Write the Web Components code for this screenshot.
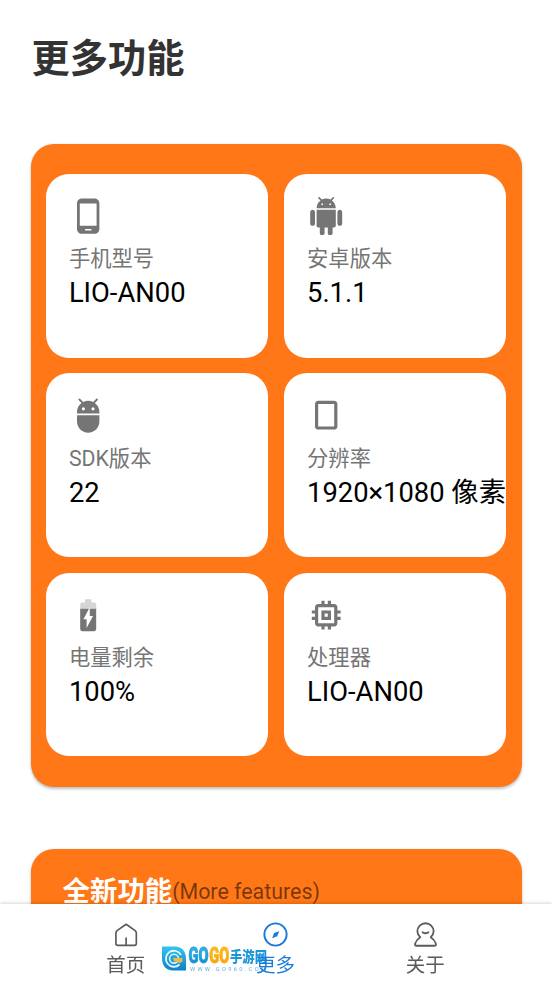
<!DOCTYPE html>
<html lang="zh-CN">
<head>
<meta charset="utf-8">
<title>更多功能</title>
<style>
html,body{margin:0;height:100%;overflow:hidden;background:#fff}
body{font-family:Roboto,"Noto Sans CJK SC",sans-serif}
</style>
</head>
<body>
<more-page></more-page>
<script>
const define = (name, html) => customElements.define(name, class extends HTMLElement {
  connectedCallback() {
    if (this.shadowRoot) return;
    this.attachShadow({mode: 'open'}).innerHTML = typeof html === 'function' ? html(this) : html;
  }
});

const icons = {
  phone: '<path d="M16 1H8C6.34 1 5 2.34 5 4v16c0 1.66 1.34 3 3 3h8c1.66 0 3-1.34 3-3V4c0-1.66-1.34-3-3-3zm-2 20h-4v-1h4v1zm3.25-3H6.75V4h10.5v14z"/>',
  android: '<path d="M6 18c0 .55.45 1 1 1h1v3.5c0 .83.67 1.5 1.5 1.5s1.5-.67 1.5-1.5V19h2v3.5c0 .83.67 1.5 1.5 1.5s1.5-.67 1.5-1.5V19h1c.55 0 1-.45 1-1V8H6v10zM3.5 8C2.67 8 2 8.67 2 9.5v7c0 .83.67 1.5 1.5 1.5S5 17.33 5 16.5v-7C5 8.67 4.33 8 3.5 8zm17 0c-.83 0-1.5.67-1.5 1.5v7c0 .83.67 1.5 1.5 1.5s1.5-.67 1.5-1.5v-7c0-.83-.67-1.5-1.5-1.5zm-4.97-5.84l1.3-1.3c.2-.2.2-.51 0-.71-.2-.2-.51-.2-.71 0l-1.48 1.48C13.85 1.23 12.95 1 12 1c-.96 0-1.86.23-2.66.63L7.85.15c-.2-.2-.51-.2-.71 0-.2.2-.2.51 0 .71l1.31 1.31C6.97 3.26 6 5.01 6 7h12c0-1.99-.97-3.75-2.47-4.84zM10 5H9V4h1v1zm5 0h-1V4h1v1z"/>',
  adb: '<path d="M5 16c0 3.87 3.13 7 7 7s7-3.13 7-7v-4H5v4zM16.12 4.37l2.1-2.1-.82-.83-2.3 2.31C14.16 3.28 13.12 3 12 3s-2.16.28-3.09.75L6.6 1.44l-.82.83 2.1 2.1C6.14 5.64 5 7.68 5 10v1h14v-1c0-2.32-1.14-4.36-2.88-5.63zM9 9c-.55 0-1-.45-1-1s.45-1 1-1 1 .45 1 1-.45 1-1 1zm6 0c-.55 0-1-.45-1-1s.45-1 1-1 1 .45 1 1-.45 1-1 1z"/>',
  portrait: '<path d="M17 3H7c-1.1 0-2 .9-2 2v14c0 1.1.9 2 2 2h10c1.1 0 2-.9 2-2V5c0-1.1-.9-2-2-2zm0 16H7V5h10v14z"/>',
  battery: '<path fill-opacity=".3" d="M17 5.33C17 4.6 16.4 4 15.67 4H14V2h-4v2H8.33C7.6 4 7 4.6 7 5.33V8h5.47L13 7v1h4V5.33z"/><path d="M13 8v4.5h2L11 20v-5.5H9L12.47 8H7v12.67C7 21.4 7.6 22 8.33 22h7.33c.74 0 1.34-.6 1.34-1.33V8h-4z"/>',
  memory: '<path d="M15 9H9v6h6V9zm-2 4h-2v-2h2v2zm8-2V9h-2V7c0-1.1-.9-2-2-2h-2V3h-2v2h-2V3H9v2H7c-1.1 0-2 .9-2 2v2H3v2h2v2H3v2h2v2c0 1.1.9 2 2 2h2v2h2v-2h2v2h2v-2h2c1.1 0 2-.9 2-2v-2h2v-2h-2v-2h2zm-4 6H7V7h10v10z"/>',
  home: '<g fill="none" stroke="currentColor" stroke-width="1.6" stroke-linejoin="round" stroke-linecap="round"><path d="M12.6 2.2 21 8.1Q22.4 9.2 22.4 10.8V20.6Q22.4 22.4 20.6 22.4H4.6Q2.8 22.4 2.8 20.6V10.8Q2.8 9.2 4.2 8.1z"/><path d="M12.6 15.5v6.5"/></g>',
  compass: '<circle cx="12" cy="12" r="10.7" fill="none" stroke="currentColor" stroke-width="1.8"/><path d="M15.6 8.8 13.6 13.6 8.8 15.6 10.6 10.6z"/>',
  person: '<g fill="none" stroke="currentColor" stroke-width="1.7" stroke-linejoin="round" stroke-linecap="round"><path d="M7 14.6A7.6 7.6 0 0 1 4.2 9a7.8 7.8 0 0 1 15.6 0 7.6 7.6 0 0 1-2.8 5.6Q20.8 17 21.8 20.4L22.1 21.6Q22.1 22.8 21 22.8H3Q1.9 22.8 1.9 21.6L2.2 20.4Q3.2 17 7 14.6z"/><path d="M9.2 9.8Q12 11.8 14.8 9.8"/></g>'
};

define('app-icon', el => `<style>:host{display:block;width:38.4px;height:38.4px}svg{display:block;width:100%;height:100%}</style><svg viewBox="0 0 24 24" fill="currentColor">${icons[el.getAttribute('name')]}</svg>`);

define('info-card', el => `<style>
:host{display:block;box-sizing:border-box;min-width:0;background:#fff;border-radius:23px;padding:23px 0 0 23px;overflow:hidden;white-space:nowrap}
app-icon{color:#757575}
.label{font-size:21.3px;line-height:28px;color:#757575;margin-top:9.8px}
.value{font-size:27.35px;line-height:36px;color:#000;margin-top:2px}
</style><app-icon name="${el.getAttribute('icon')}"></app-icon><div class="label"><slot name="label"></slot></div><div class="value"><slot></slot></div>`);

define('orange-panel', `<style>:host{display:block;box-sizing:border-box;background:#ff7716;border-radius:23px;box-shadow:0 1.5px 3px rgba(0,0,0,.26)}</style><slot></slot>`);

define('nav-item', el => `<style>
:host{flex:1;display:flex;flex-direction:column;align-items:center;color:#5b5b5b;padding-top:18px}
:host([active]){color:#1a7bd8}
app-icon{width:25px;height:25px}
.t{font-size:19.5px;line-height:28px;margin-top:5px}
</style><app-icon name="${el.getAttribute('icon')}"></app-icon><div class="t"><slot></slot></div>`);

define('site-mark', `<style>
:host{display:block;position:absolute;left:161px;top:42px;width:108px;height:28px}
svg{display:block;overflow:visible}
</style><svg width="108" height="28" viewBox="0 0 108 28">
<defs><linearGradient id="b" x1="0" y1="0" x2="0" y2="1"><stop offset="0" stop-color="#35c4ee"/><stop offset="1" stop-color="#0c80cc"/></linearGradient>
<linearGradient id="o" x1="0" y1="0" x2="0" y2="1"><stop offset="0" stop-color="#ffc51b"/><stop offset="1" stop-color="#f89a10"/></linearGradient></defs>
<path fill="url(#b)" d="M1 .5H14C21 .5 25 5.5 25 12.5V24.5H12C5 24.5 1 19.5 1 12.5z"/>
<path fill="none" stroke="#e6f8ff" stroke-width="1.8" d="M20 9A8 8 0 1 0 18.5 18.5"/>
<circle cx="13" cy="12.7" r="4.4" fill="none" stroke="#d9f4ff" stroke-width="1.6"/>
<path fill="#f0b94c" d="M12 12h9.5v3.4l-3 2-1.5-2h-4z"/>
<g font-family="Roboto,'Noto Sans CJK SC',sans-serif" font-weight="900">
<text x="27.5" y="17.3" font-size="21.5" textLength="20" lengthAdjust="spacingAndGlyphs" fill="url(#b)" stroke="#1b9bdb" stroke-width=".8">GO</text>
<text x="48.3" y="17.3" font-size="21.5" textLength="20" lengthAdjust="spacingAndGlyphs" fill="url(#o)" stroke="#fbae15" stroke-width=".8">GO</text>
<text x="69" y="16" font-size="14.5" textLength="37" lengthAdjust="spacingAndGlyphs" fill="#1b96d8">手游网</text>
<text x="29" y="25" font-size="5.8" font-weight="400" textLength="76" fill="#5fb2e0">WWW.GO960.COM</text>
</g></svg>`);

define('bottom-nav', `<style>
:host{display:flex;box-sizing:border-box;position:fixed;left:0;right:0;bottom:0;height:77px;padding:0 52px 0 51px;background:#fff;box-shadow:0 -1px 3px rgba(0,0,0,.16)}
nav-item{position:relative;z-index:1}
</style><site-mark></site-mark><nav-item icon="home">首页</nav-item><nav-item icon="compass" active>更多</nav-item><nav-item icon="person">关于</nav-item>`);

define('more-page', `<style>
:host{display:block;box-sizing:border-box;padding:31px 30.5px 0 30.6px}
h1{margin:0 0 56.6px 1px;font-size:38.2px;line-height:57px;height:56px;font-weight:700;color:#333}
.grid{display:grid;grid-template-columns:1fr 1fr;grid-template-rows:repeat(3,183.6px);gap:15.8px 16px;padding:30.4px 15.3px 30.2px}
.more{margin-top:62px;height:160px;padding:23px 32px;display:flex;align-items:flex-start;white-space:nowrap}
.panels{display:flex;flex-direction:column}
b{font-size:27.4px;line-height:40px;color:#fff}
small{font-size:21.4px;line-height:39px;color:rgba(0,0,0,.54)}
</style>
<h1>更多功能</h1>
<div class="panels">
<orange-panel><div class="grid">
<info-card icon="phone"><span slot="label">手机型号</span>LIO-AN00</info-card>
<info-card icon="android"><span slot="label">安卓版本</span>5.1.1</info-card>
<info-card icon="adb"><span slot="label">SDK版本</span>22</info-card>
<info-card icon="portrait"><span slot="label">分辨率</span>1920×1080 像素</info-card>
<info-card icon="battery"><span slot="label">电量剩余</span>100%</info-card>
<info-card icon="memory"><span slot="label">处理器</span>LIO-AN00</info-card>
</div></orange-panel>
<orange-panel class="more"><b>全新功能</b><small>(More features)</small></orange-panel>
</div>
<bottom-nav></bottom-nav>`);
</script>
</body>
</html>
